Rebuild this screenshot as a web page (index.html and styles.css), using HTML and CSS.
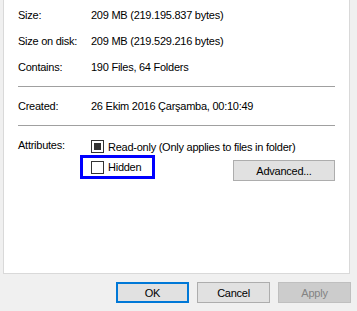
FILE: index.html
```html
<!DOCTYPE html>
<html lang="en">
<head>
    <meta charset="UTF-8">
    <title>Folder Properties</title>
    <link rel="stylesheet" href="styles.css">
</head>
<body>
    <div class="dialog">
        <!-- General tab -->
        <div class="panel">
            <div class="row first">
                <span class="label">Size:</span>
                <span class="value">209 MB (219.195.837 bytes)</span>
            </div>
            <div class="row">
                <span class="label">Size on disk:</span>
                <span class="value">209 MB (219.529.216 bytes)</span>
            </div>
            <div class="row">
                <span class="label">Contains:</span>
                <span class="value">190 Files, 64 Folders</span>
            </div>

            <div class="sep"></div>

            <div class="row">
                <span class="label">Created:</span>
                <span class="value">26 Ekim 2016 Çarşamba, 00:10:49</span>
            </div>

            <div class="sep"></div>

            <div class="row attrs">
                <span class="label">Attributes:</span>
                <div class="attrList">
                    <div class="check">
                        <span class="box mixed"></span>
                        <span>Read-only (Only applies to files in folder)</span>
                    </div>
                    <div class="hiddenRow">
                        <div class="check marked">
                            <span class="box"></span>
                            <span>Hidden</span>
                        </div>
                        <button class="btn advanced">Advanced...</button>
                    </div>
                </div>
            </div>
        </div>

        <!-- Buttons -->
        <div class="footer">
            <button class="btn default">OK</button>
            <button class="btn">Cancel</button>
            <button class="btn" disabled>Apply</button>
        </div>
    </div>
</body>
</html>
```

FILE: styles.css
```css
body {
    margin: 0;
    background: #f0f0f0;
    font-family: "Liberation Sans", Arial, sans-serif;
    font-size: 11px;
    letter-spacing: -0.25px;
    color: #000;
}

.dialog {
    width: 357px;
    height: 311px;
}

.panel {
    box-sizing: border-box;
    margin-left: 3px;
    width: 347px;
    height: 274px;
    background: #fff;
    border: 1px solid #d9d9d9;
    border-top: none;
    padding: 7px 14px 0 14px;
}

.row {
    display: flex;
    line-height: 16px;
    margin-top: 10px;
}

.row.first {
    margin-top: 0;
}

.label {
    width: 73px;
    flex-shrink: 0;
}

.sep {
    height: 1px;
    background: #a0a0a0;
    margin: 11px 0;
}

.sep + .row {
    margin-top: 0;
}

.attrList {
    flex: 1;
    margin-top: 1px;
}

.check {
    display: flex;
    align-items: center;
    height: 17px;
}

.box {
    box-sizing: border-box;
    width: 13px;
    height: 13px;
    border: 1px solid #333;
    margin-right: 4px;
    padding: 2px;
    background: #fff;
}

.box.mixed::after {
    content: "";
    display: block;
    width: 7px;
    height: 7px;
    background: #333;
}

.hiddenRow {
    display: flex;
    justify-content: space-between;
    align-items: flex-start;
}

.check.marked {
    box-sizing: border-box;
    height: 24px;
    margin-left: -11px;
    padding: 0 11px 0 8px;
    border: 3px solid #0000ff;
}

.btn {
    box-sizing: border-box;
    height: 21px;
    width: 73px;
    padding: 0;
    font-family: inherit;
    font-size: 11px;
    letter-spacing: inherit;
    color: #000;
    background: #e1e1e1;
    border: 1px solid #adadad;
    border-radius: 0;
}

.btn.advanced {
    width: 102px;
    margin-top: 5px;
}

.btn.default {
    border: 2px solid #0078d7;
}

.btn:disabled {
    background: #cccccc;
    border-color: #bfbfbf;
    color: #838383;
}

.footer {
    display: flex;
    justify-content: flex-end;
    gap: 8px;
    padding: 8px 6px 0 0;
}
```
